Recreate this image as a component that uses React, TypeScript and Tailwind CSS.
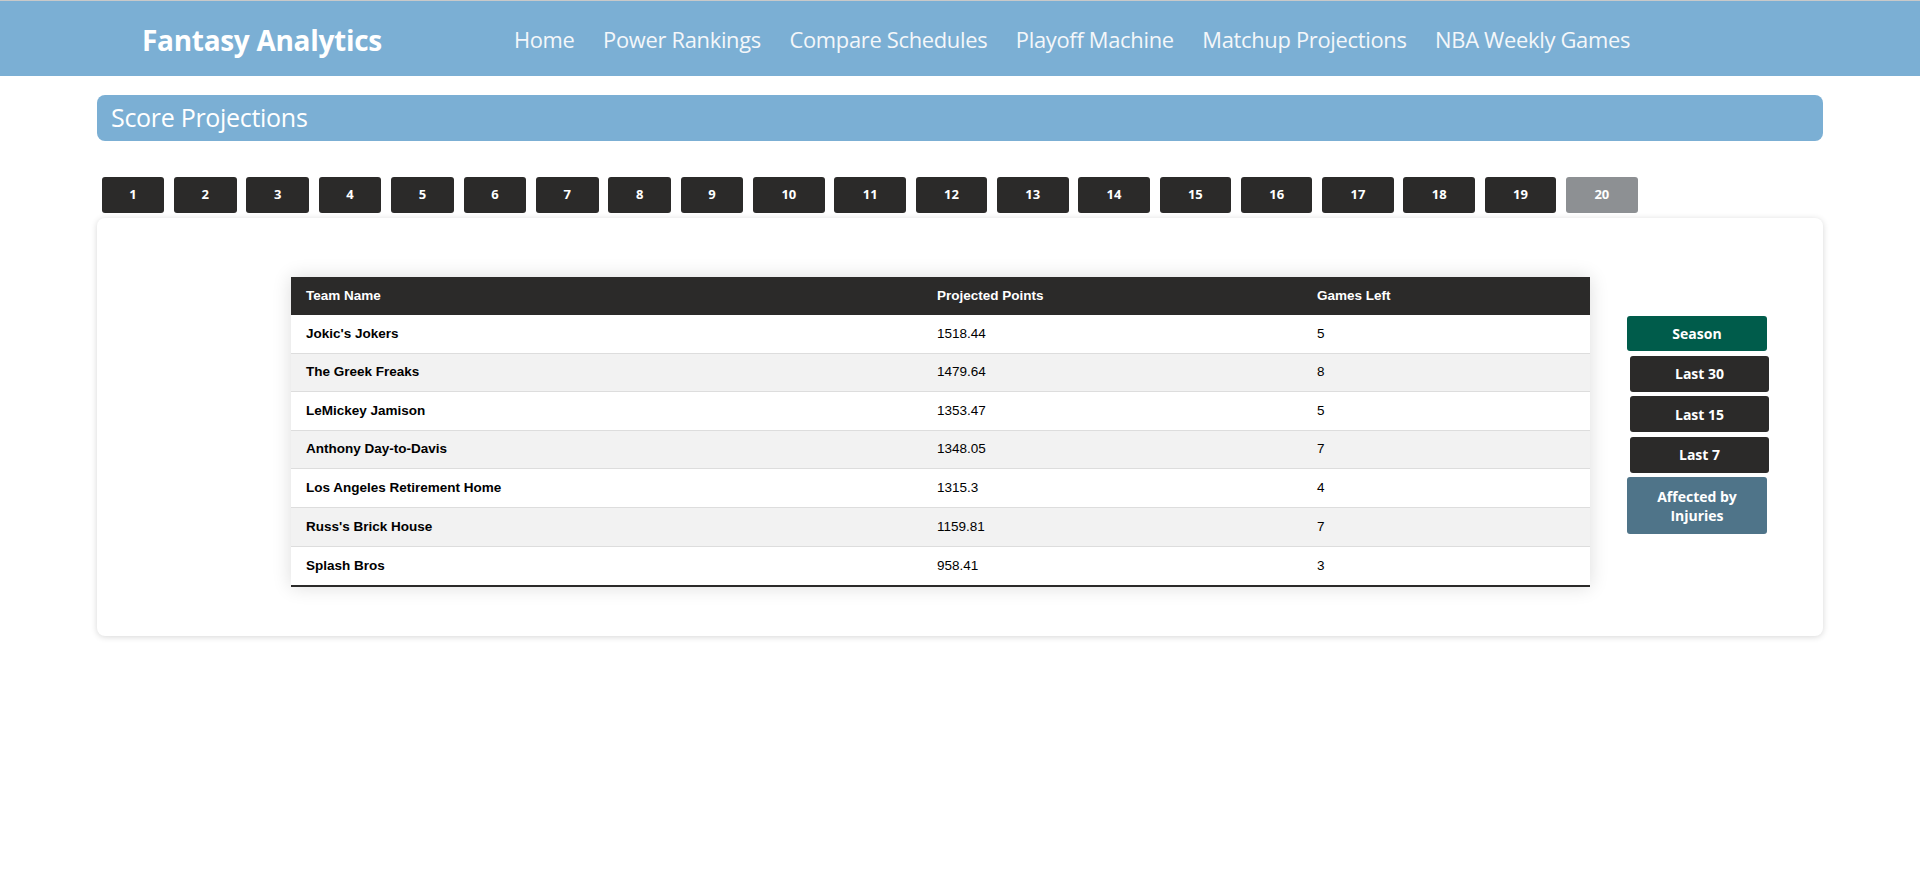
import React from "react";

const rows: [string, string, string][] = [
  ["Jokic's Jokers", "1518.44", "5"],
  ["The Greek Freaks", "1479.64", "8"],
  ["LeMickey Jamison", "1353.47", "5"],
  ["Anthony Day-to-Davis", "1348.05", "7"],
  ["Los Angeles Retirement Home", "1315.3", "4"],
  ["Russ's Brick House", "1159.81", "7"],
  ["Splash Bros", "958.41", "3"],
];

const links = [
  "Home",
  "Power Rankings",
  "Compare Schedules",
  "Playoff Machine",
  "Matchup Projections",
  "NBA Weekly Games",
];

export default function App() {
  const weeks = Array.from({ length: 20 }, (_, i) => i + 1);
  return (
    <div className="min-h-screen bg-white font-['Open_Sans','Noto_Sans',sans-serif]">
      <nav className="h-[76px] bg-[#7bafd4] border-t border-[#c9c9c9] flex items-center">
        <div className="pl-[142px] text-white font-bold text-[28px] tracking-[-0.3px] leading-none pt-[2px]">
          Fantasy Analytics
        </div>
        <div className="ml-[132px] flex gap-[28.5px] text-[#f4f7fa] text-[21.9px] leading-none tracking-[-0.3px] pt-[2px]">
          {links.map((l) => (
            <span key={l}>{l}</span>
          ))}
        </div>
      </nav>
      <main className="w-[1726px] mx-auto pt-[19px]">
        <div className="h-[46px] rounded-[8px] bg-[#7bafd4] flex items-center pl-[14px] text-white text-[25px] tracking-[-0.3px]">
          Score Projections
        </div>
        <div className="mt-[36px] flex gap-[9.8px] pl-[4.6px]">
          {weeks.map((w) => (
            <button
              key={w}
              className={
                "h-[36px] rounded-[3px] text-white font-bold text-[13px] flex items-center justify-center " +
                (w < 10 ? "w-[62.6px] " : "w-[71.5px] ") +
                (w === 20 ? "bg-[#8d9093]" : "bg-[#2b2a29]")
              }
            >
              {w}
            </button>
          ))}
        </div>
        <div className="mt-[5px] h-[418px] rounded-[8px] bg-white shadow-[0_1px_6px_rgba(0,0,0,0.16)] flex items-start pl-[194px] pt-[59px]">
          <div className="w-[1299px] shadow-[0_0_18px_rgba(0,0,0,0.14)] font-['Liberation_Sans',Arial,sans-serif] text-[13.5px] border-b-[2px] border-[#2b2a29]">
            <div className="h-[38px] bg-[#2b2a29] text-white font-bold flex items-center">
              <div className="w-[631px] pl-[15px]">Team Name</div>
              <div className="w-[380px] pl-[15px]">Projected Points</div>
              <div className="flex-1 pl-[15px]">Games Left</div>
            </div>
            {rows.map((r, i) => (
              <div
                key={r[0]}
                className={
                  "h-[38.6px] flex items-center text-black " +
                  (i < rows.length - 1 ? "border-b border-[#dddddd] " : "") +
                  (i % 2 === 1 ? "bg-[#f2f2f2]" : "bg-white")
                }
              >
                <div className="w-[631px] pl-[15px] font-bold">{r[0]}</div>
                <div className="w-[380px] pl-[15px]">{r[1]}</div>
                <div className="flex-1 pl-[15px]">{r[2]}</div>
              </div>
            ))}
          </div>
          <div className="ml-[37px] mt-[39px] flex flex-col gap-[4.5px] text-white font-bold text-[14px] leading-[19px]">
            <button className="w-[140px] h-[35px] rounded-[3px] bg-[#005c4b]">Season</button>
            <button className="ml-[3px] w-[139px] h-[36px] rounded-[3px] bg-[#2b2a29]">Last 30</button>
            <button className="ml-[3px] w-[139px] h-[36px] rounded-[3px] bg-[#2b2a29]">Last 15</button>
            <button className="ml-[3px] w-[139px] h-[36px] rounded-[3px] bg-[#2b2a29]">Last 7</button>
            <button className="w-[140px] h-[57px] rounded-[3px] bg-[#4f7489] px-[8px]">
              Affected by Injuries
            </button>
          </div>
        </div>
      </main>
    </div>
  );
}
